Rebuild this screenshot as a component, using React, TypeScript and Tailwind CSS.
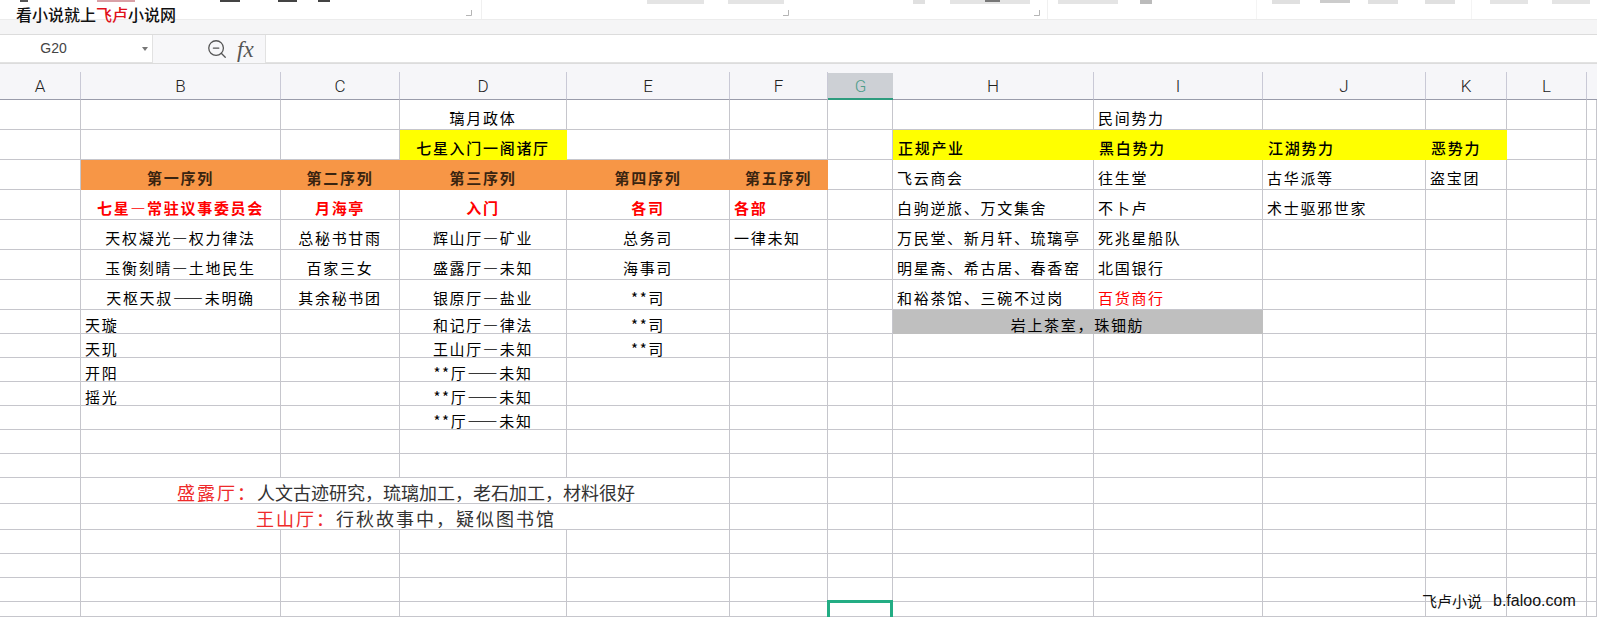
import React from 'react';
import { ZoomOut } from 'lucide-react';

type CellDef = { text?: React.ReactNode; cls?: string };

const cjk = "font-['Noto_Sans_CJK_SC',sans-serif]";

const columns = [
  { name: 'A', cls: 'w-[81px]' },
  { name: 'B', cls: 'w-[200px]' },
  { name: 'C', cls: 'w-[119px]' },
  { name: 'D', cls: 'w-[167px]' },
  { name: 'E', cls: 'w-[163px]' },
  { name: 'F', cls: 'w-[98px]' },
  { name: 'G', cls: 'w-[65px]' },
  { name: 'H', cls: 'w-[201px]' },
  { name: 'I', cls: 'w-[169px]' },
  { name: 'J', cls: 'w-[163px]' },
  { name: 'K', cls: 'w-[81px]' },
  { name: 'L', cls: 'w-[80px]' },
];

const center = 'justify-center';
const left = 'justify-start pl-[4px]';
const orange = 'justify-center bg-[#f79646] border-transparent font-bold !text-[#3a2410]';
const yellow = 'justify-start pl-[5px] bg-[#ffff00] border-transparent font-medium';
const redBold = 'justify-center !text-[#ff0000] font-bold';

// keyed by column + row, cells that are not listed stay empty
const cells: Record<string, CellDef> = {
  D1: { text: '璃月政体', cls: center },
  I1: { text: '民间势力', cls: left },

  D2: { text: '七星入门一阁诸厅', cls: 'justify-center bg-[#ffff00] border-transparent font-medium' },
  H2: { text: '正规产业', cls: yellow },
  I2: { text: '黑白势力', cls: yellow },
  J2: { text: '江湖势力', cls: yellow },
  K2: { text: '恶势力', cls: yellow },

  B3: { text: '第一序列', cls: orange },
  C3: { text: '第二序列', cls: orange },
  D3: { text: '第三序列', cls: orange },
  E3: { text: '第四序列', cls: orange },
  F3: { text: '第五序列', cls: orange },
  H3: { text: '飞云商会', cls: left },
  I3: { text: '往生堂', cls: left },
  J3: { text: '古华派等', cls: left },
  K3: { text: '盗宝团', cls: left },

  B4: { text: '七星—常驻议事委员会', cls: redBold },
  C4: { text: '月海亭', cls: redBold },
  D4: { text: '入门', cls: redBold },
  E4: { text: '各司', cls: redBold },
  F4: { text: '各部', cls: 'justify-start pl-[4px] !text-[#ff0000] font-bold' },
  H4: { text: '白驹逆旅、万文集舍', cls: left },
  I4: { text: '不卜卢', cls: left },
  J4: { text: '术士驱邪世家', cls: left },

  B5: { text: '天权凝光—权力律法', cls: center },
  C5: { text: '总秘书甘雨', cls: center },
  D5: { text: '辉山厅—矿业', cls: center },
  E5: { text: '总务司', cls: center },
  F5: { text: '一律未知', cls: 'justify-start pl-[4px]' },
  H5: { text: '万民堂、新月轩、琉璃亭', cls: left },
  I5: { text: '死兆星船队', cls: left },

  B6: { text: '玉衡刻晴—土地民生', cls: center },
  C6: { text: '百家三女', cls: center },
  D6: { text: '盛露厅—未知', cls: center },
  E6: { text: '海事司', cls: center },
  H6: { text: '明星斋、希古居、春香窑', cls: left },
  I6: { text: '北国银行', cls: left },

  B7: { text: '天枢天叔——未明确', cls: center },
  C7: { text: '其余秘书团', cls: center },
  D7: { text: '银原厅—盐业', cls: center },
  E7: { text: '**司', cls: center },
  H7: { text: '和裕茶馆、三碗不过岗', cls: left },
  I7: { text: '百货商行', cls: 'justify-start pl-[4px] !text-[#ff0000]' },

  B8: { text: '天璇', cls: left },
  D8: { text: '和记厅—律法', cls: center },
  E8: { text: '**司', cls: center },
  H8: { text: '岩上茶室，珠钿舫', cls: 'col-span-2 justify-center bg-[#bfbfbf] border-transparent' },

  B9: { text: '天玑', cls: left },
  D9: { text: '王山厅—未知', cls: center },
  E9: { text: '**司', cls: center },

  B10: { text: '开阳', cls: left },
  D10: { text: '**厅——未知', cls: center },
  B11: { text: '摇光', cls: left },
  D11: { text: '**厅——未知', cls: center },
  D12: { text: '**厅——未知', cls: center },

  B15: {
    text: (
      <>
        <span className="tracking-[2px] text-[#ee2a2a]">盛露厅：</span>
        <span>人文古迹研究，琉璃加工，老石加工，材料很好</span>
      </>
    ),
    cls: 'col-span-4 justify-center !pt-[2px] pl-[2px] !text-[18px] !tracking-[0] !text-[#333]',
  },
  B16: {
    text: (
      <>
        <span className="text-[#ee2a2a]">王山厅：</span>
        <span>行秋故事中，疑似图书馆</span>
      </>
    ),
    cls: 'col-span-4 justify-center !pt-[2px] pl-[2px] !text-[18px] !tracking-[2px] !text-[#333]',
  },
};

// cells swallowed by a merge
const merged = new Set(['I8', 'C15', 'D15', 'E15', 'C16', 'D16', 'E16']);

const rowCount = 20;
const colNames = ['A', 'B', 'C', 'D', 'E', 'F', 'G', 'H', 'I', 'J', 'K', 'L', 'M'];

// bottoms of the ribbon labels that the crop cuts off
const ribbonMarks = [
  [20, 8, 2, '#555'], [97, 38, 2, '#d9a0a6'], [220, 20, 2, '#444'], [278, 19, 2, '#444'], [318, 12, 2, '#444'],
  [647, 57, 4, '#e4e4e4'], [728, 56, 4, '#e4e4e4'], [913, 12, 4, '#e0e0e0'], [950, 80, 4, '#e4e4e4'], [985, 15, 2, '#777'],
  [1058, 60, 4, '#e4e4e4'], [1140, 12, 4, '#bbb'], [1272, 28, 4, '#e0e0e0'], [1320, 30, 3, '#ccc'], [1368, 30, 4, '#e0e0e0'],
  [1425, 30, 4, '#e0e0e0'], [1490, 38, 4, '#e4e4e4'], [1552, 38, 4, '#e4e4e4'],
] as const;

const Launcher = () => (
  <svg width="6" height="6" viewBox="0 0 6 6" className="shrink-0">
    <path d="M5.5 0v5.5H0" fill="none" stroke="#b5b5b5" strokeWidth="1" />
  </svg>
);

const Ribbon = () => (
  <div className="relative flex h-[19px] bg-white">
    <svg width="1597" height="5" className="absolute left-0 top-0">
      {ribbonMarks.map(([x, w, h, c], i) => (
        <rect key={i} x={x} y="0" width={w} height={h} fill={c} />
      ))}
    </svg>
    <div className="flex w-[482px] items-end justify-end border-r border-[#f0f0f0] pb-[3px] pr-[9px]">
      <Launcher />
    </div>
    <div className="flex w-[566px] items-end justify-end gap-[245px] border-r border-[#f0f0f0] pb-[3px] pr-[7px]">
      <Launcher />
      <Launcher />
    </div>
    <div className="w-[209px] border-r border-[#f4f4f4]" />
    <div className="w-[215px] border-r border-[#f4f4f4]" />
    <div className="flex-1" />
  </div>
);

const FormulaBar = () => (
  <div className="flex h-[29px] border-t border-[#dcdcdc] bg-[#f7f7f9]">
    <div className="relative flex w-[153px] items-center justify-center border-b border-r border-[#e2e2e2] bg-white pr-[45px] font-['Liberation_Sans',sans-serif] text-[14px] text-[#444]">
      G20
      <span className="absolute right-[4px] top-[12px] h-0 w-0 border-x-[3px] border-t-[4px] border-x-transparent border-t-[#777]" />
    </div>
    <div className="flex w-[112px] items-center pl-[53px] text-[#555]">
      <ZoomOut size={22} strokeWidth={1.4} />
      <span className="ml-[9px] font-['Liberation_Serif',serif] text-[23px] italic leading-none">fx</span>
    </div>
    <div className="flex-1 border-b border-l border-[#e2e2e2] bg-white" />
  </div>
);

const ColumnHeaders = () => (
  <div className="flex h-[38px] items-end border-t border-[#dcdcdc] bg-[#f6f6f9]">
    {columns.map((c) =>
      c.name === 'G' ? (
        <div
          key={c.name}
          className={`${c.cls} flex h-[27px] items-center justify-center border-b-2 border-[#2e9c7e] bg-[#cdd0d5] pt-[2px] font-['Roboto',sans-serif] text-[17px] font-light text-[#4f9d8a]`}
        >
          {c.name}
        </div>
      ) : (
        <div
          key={c.name}
          className={`${c.cls} flex h-[28px] items-center justify-center border-b border-r border-b-[#9a9cab] border-r-[#c9c9d6] pt-[2px] font-['Roboto',sans-serif] text-[17px] font-light text-[#222]`}
        >
          {c.name}
        </div>
      ),
    )}
    <div className="h-[28px] flex-1 border-b border-[#9a9cab]" />
  </div>
);

const Sheet = () => (
  <div className="relative grid flex-1 grid-cols-[81px_200px_119px_167px_163px_98px_65px_201px_169px_163px_81px_80px_10px] grid-rows-[30px_30px_30px_30px_30px_30px_30px_24px_24px_24px_24px_24px_24px_24px_26px_26px_24px_24px_24px_15px] bg-white">
    {Array.from({ length: rowCount }, (_, r) =>
      colNames.map((col) => {
        const key = `${col}${r + 1}`;
        if (merged.has(key)) return null;
        const cell = cells[key];
        return (
          <div
            key={key}
            className={`flex items-center overflow-visible whitespace-nowrap border-b border-r border-[#c6c6cc] pt-[6px] ${cjk} text-[15px] leading-none tracking-[1.7px] text-black ${cell?.cls ?? ''}`}
          >
            {cell?.text}
          </div>
        );
      }),
    )}
    {/* active cell G20 */}
    <div className="absolute left-[827px] top-[500px] h-[20px] w-[66px] border-[3px] border-[#23ad84]" />
  </div>
);

export default function App() {
  return (
    <div lang="zh-CN" className="relative flex h-[617px] w-[1597px] flex-col overflow-hidden bg-white">
      <Ribbon />
      <div className="h-[16px] border-t border-[#ececec] bg-[#f5f5f6]" />
      <FormulaBar />
      <ColumnHeaders />
      <Sheet />

      {/* site watermarks stamped over the screenshot */}
      <div className={`absolute left-[16px] top-[5px] ${cjk} text-[16px] font-medium leading-[18px] text-[#111]`}>
        看小说就上<span className="text-[#e0101a]">飞卢</span>小说网
      </div>
      <div className={`absolute left-[1422px] top-[592px] flex items-center gap-[11px] ${cjk} text-[15px] leading-[18px] text-[#111]`}>
        <span>飞卢小说</span>
        <span className="font-['Liberation_Sans',sans-serif] text-[16px]">b.faloo.com</span>
      </div>
    </div>
  );
}
